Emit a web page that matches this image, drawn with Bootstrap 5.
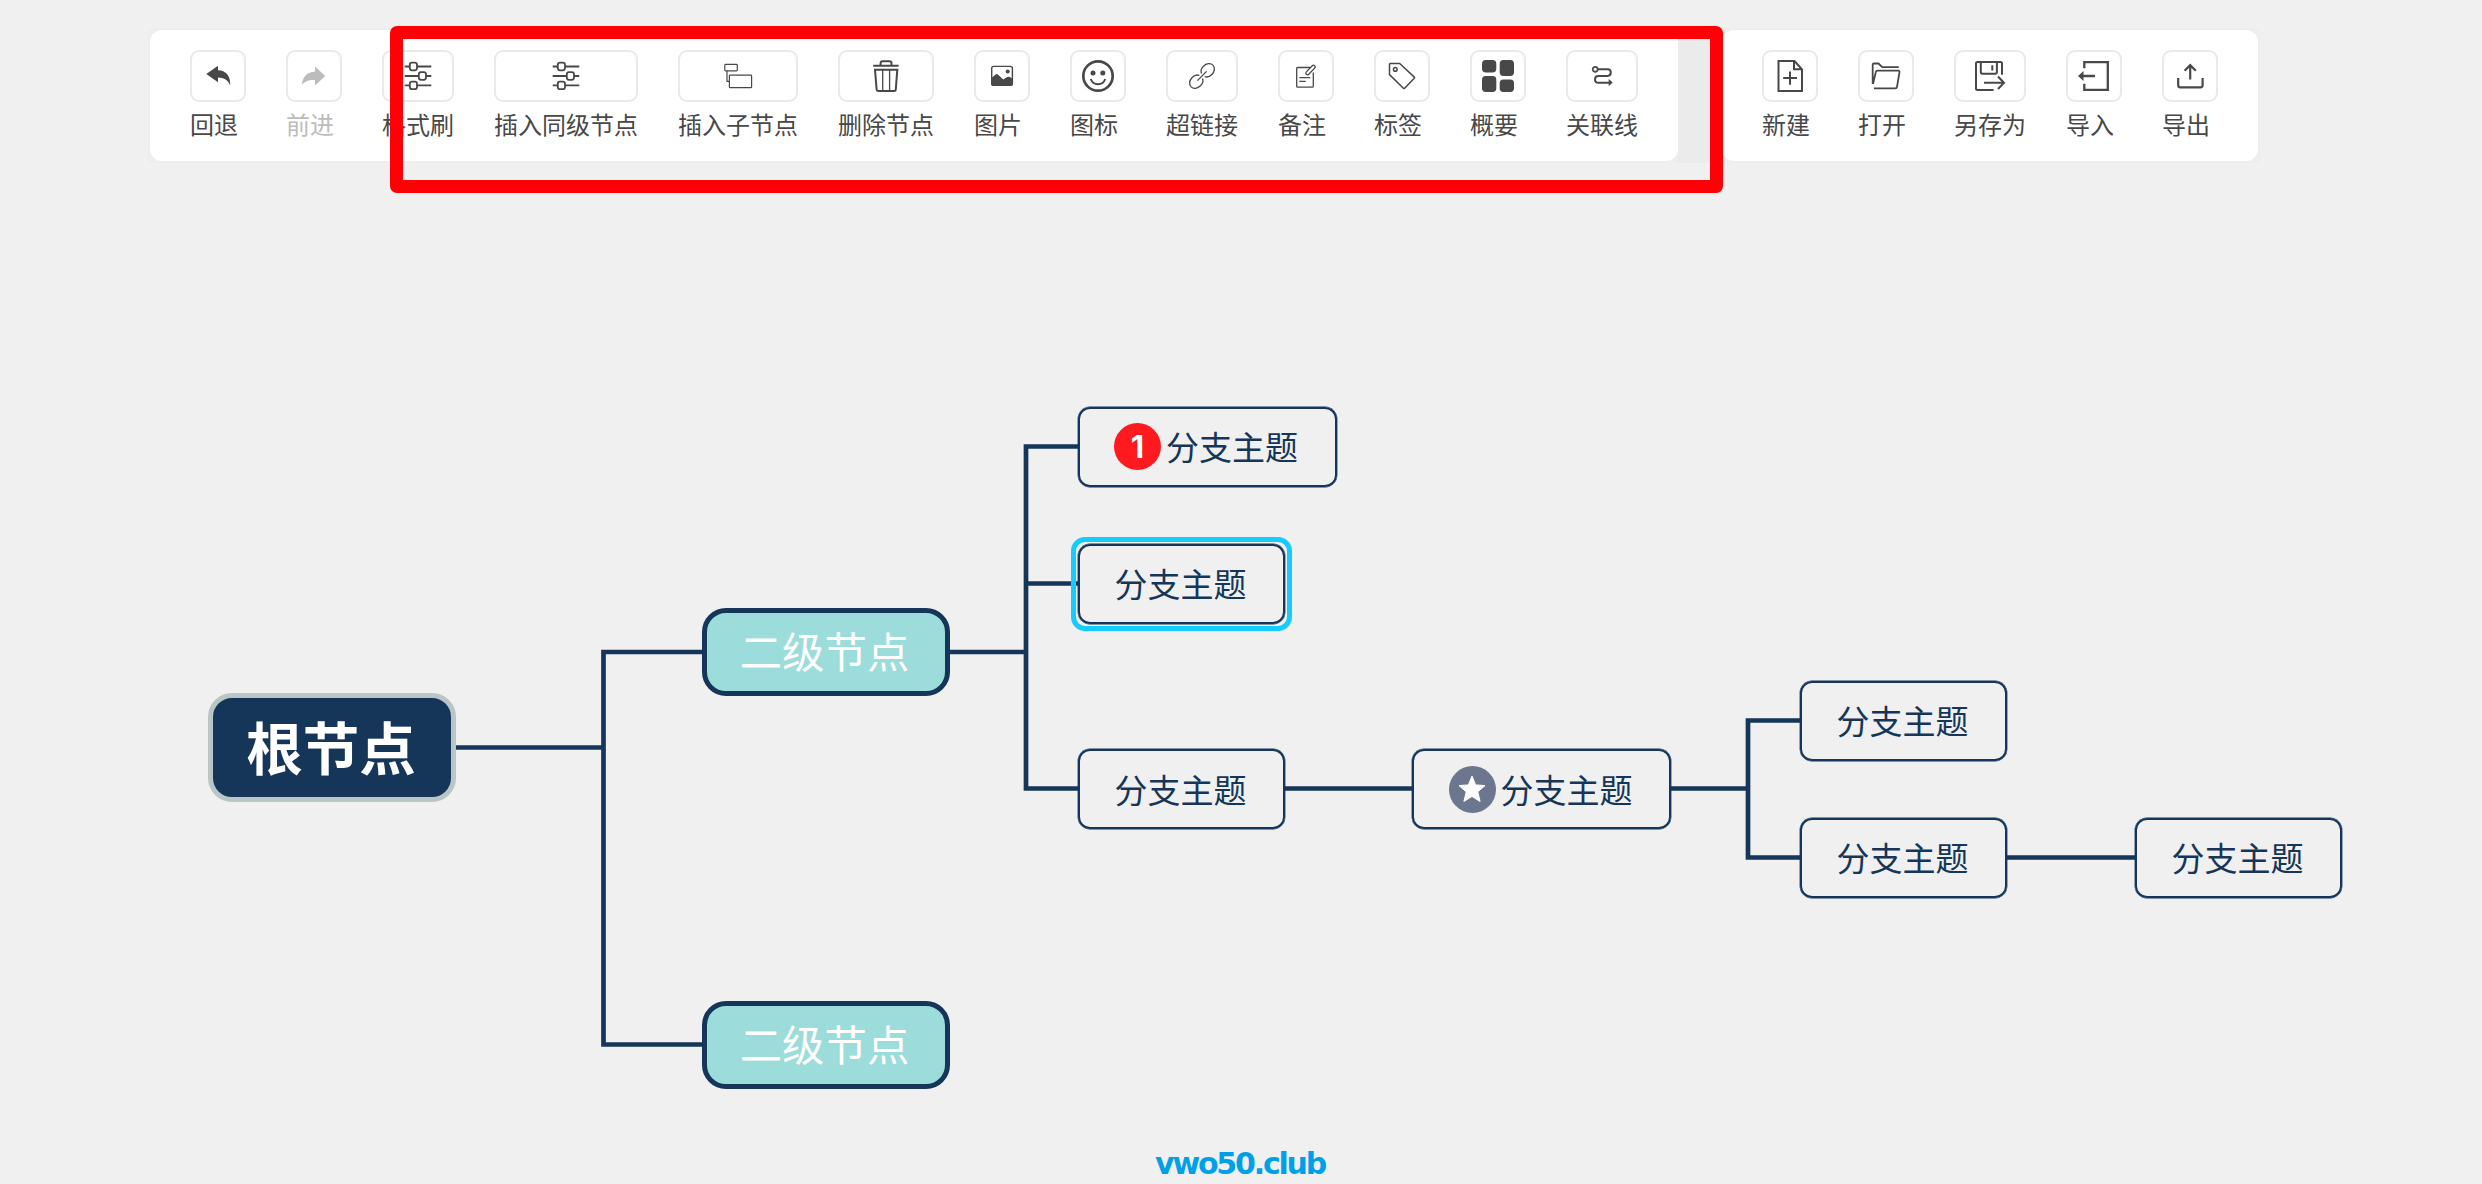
<!DOCTYPE html>
<html lang="zh-CN">
  <head>
    <meta charset="UTF-8" />
    <meta name="viewport" content="width=device-width, initial-scale=1.0" />
    <title>思维导图</title>
    <!-- Bootstrap CSS CDN -->
    <link
      href="https://cdn.jsdelivr.net/npm/bootstrap@5.3.3/dist/css/bootstrap.min.css"
      rel="stylesheet"
      crossorigin="anonymous"
    />
    <style>
      :root {
        --navy: #163659;
        --ink: #484848;
      }
      body {
        width: 2482px;
        height: 1184px;
        background: #f0f0f0;
        color: var(--ink);
        font-family: "Noto Sans CJK SC", sans-serif;
      }
      /* Toolbar */
      .toolbar-row {
        width: 2112px;
        height: 135px;
        margin: 28px 0 0 148px;
        padding: 2px;
        gap: 44px;
        background: linear-gradient(#ebebeb, #ebebeb) 1530px 0 / 48px 100% no-repeat #eeeeee;
      }
      .tool-group {
        height: 131px;
        padding: 20px 40px 0;
        gap: 40px;
        border-radius: 12px;
      }
      .tool-btn {
        color: inherit;
        font-size: 24px;
        line-height: 43px;
        white-space: nowrap;
      }
      .tool-btn.off {
        color: #bcbcbc;
      }
      .tool-icon {
        min-width: 56px;
        height: 52px;
        border: 2px solid #e9e9e9;
        border-radius: 9px;
      }
      .tool-icon svg {
        width: 32px;
        height: 32px;
        fill: none;
        stroke: currentColor;
        stroke-width: 2;
        overflow: visible;
      }
      .tool-icon svg .solid {
        fill: currentColor;
        stroke: none;
      }
      .red-frame {
        left: 390px;
        top: 26px;
        width: 1333px;
        height: 167px;
        border: 13px solid #ff0006;
        border-radius: 7px;
      }
      /* Mind map */
      .links {
        left: 0;
        top: 0;
        fill: none;
        stroke: var(--navy);
        stroke-width: 4.7px;
      }
      .node {
        width: 207px;
        height: 80px;
        padding-right: 1px;
        gap: 5px;
        border: 2px solid var(--navy);
        border-radius: 12px;
        box-shadow: 0 0 0 0.4px var(--navy);
        color: var(--navy);
        font-size: 33px;
        line-height: 1;
        white-space: nowrap;
      }
      .node.wide {
        width: 259px;
        padding-right: 2px;
      }
      .node.second {
        width: 248px;
        height: 88px;
        padding: 0 3px 3px 0;
        border-width: 5px;
        border-radius: 24px;
        box-shadow: none;
        background: #9cdcda;
        color: #fff;
        font-size: 42.4px;
      }
      .node.root {
        width: 248px;
        height: 109px;
        padding: 0 2px 5px 0;
        border: 5px solid #bac5c8;
        border-radius: 24px;
        box-shadow: none;
        background: var(--navy);
        color: #fff;
        font-size: 56.5px;
        font-weight: 700;
      }
      .node.active::after {
        content: "";
        position: absolute;
        inset: -9px;
        border: 5px solid #16ccff;
        border-radius: 14px;
      }
      .marker {
        width: 47px;
        height: 47px;
        border-radius: 50%;
        background: #ff1a1f;
        color: #fff;
        font: 700 31px/47px Inter, sans-serif;
      }
      .marker.star {
        background: #6d768f;
      }
      #root { left: 208px; top: 693px; }
      #second1 { left: 702px; top: 608px; }
      #second2 { left: 702px; top: 1001px; }
      #topic1 { left: 1077.5px; top: 406.5px; }
      #topic2 { left: 1077.5px; top: 543.5px; }
      #topic3 { left: 1077.5px; top: 749px; }
      #topic4 { left: 1412px; top: 749px; }
      #topic5 { left: 1799.5px; top: 680.5px; }
      #topic6 { left: 1799.5px; top: 817.5px; }
      #topic7 { left: 2134.5px; top: 817.5px; }
      .site-mark {
        right: 1157px;
        bottom: 3px;
        color: #00a0e9;
        font: 700 30px/34px "DejaVu Sans", sans-serif;
        letter-spacing: -2.2px;
      }
    </style>
  </head>
  <body class="position-relative overflow-hidden">
    <!-- Toolbar Start -->
    <header class="toolbar-row d-inline-flex">
      <div class="tool-group bg-white d-flex">
        <a class="tool-btn d-flex flex-column text-decoration-none">
          <span class="tool-icon d-flex align-items-center justify-content-center">
            <svg viewBox="0 0 32 32"><path class="solid" d="M4.3 14 16 5.8v4.5c8 .2 12.7 5.7 12.2 14.9-2.7-5.5-6.7-7.4-12.2-7.6v4.6z" /></svg>
          </span>
          <span>回退</span>
        </a>
        <a class="tool-btn off d-flex flex-column text-decoration-none">
          <span class="tool-icon d-flex align-items-center justify-content-center">
            <svg viewBox="0 0 32 32"><path class="solid" d="M27.3 16 17 6.6v4.9C9 12 4.5 17 4 24.6c3.5-3.6 7-4.8 13-4.6v5.4z" /></svg>
          </span>
          <span>前进</span>
        </a>
        <a class="tool-btn d-flex flex-column text-decoration-none">
          <span class="tool-icon d-flex align-items-center justify-content-center">
            <svg viewBox="0 0 32 32">
              <g stroke-width="1.8">
                <path d="M2.7 6.500h5M15 6.500h14.300M2.700 16h14M24 16h5.300M2.700 25.400h5M15 25.400h14.300" />
                <rect x="7.800" y="2.700" width="7.200" height="7.600" rx="2.200" />
                <rect x="16.800" y="12.200" width="7.200" height="7.600" rx="2.200" />
                <rect x="7.800" y="21.600" width="7.200" height="7.600" rx="2.200" />
              </g>
            </svg>
          </span>
          <span>格式刷</span>
        </a>
        <a class="tool-btn d-flex flex-column text-decoration-none">
          <span class="tool-icon d-flex align-items-center justify-content-center">
            <svg viewBox="0 0 32 32">
              <g stroke-width="1.800">
                <path d="M2.700 6.500h5M15 6.500h14.300M2.700 16h14M24 16h5.300M2.700 25.400h5M15 25.400h14.300" />
                <rect x="7.800" y="2.700" width="7.200" height="7.600" rx="2.200" />
                <rect x="16.800" y="12.200" width="7.200" height="7.600" rx="2.200" />
                <rect x="7.800" y="21.600" width="7.200" height="7.600" rx="2.200" />
              </g>
            </svg>
          </span>
          <span>插入同级节点</span>
        </a>
        <a class="tool-btn d-flex flex-column text-decoration-none">
          <span class="tool-icon d-flex align-items-center justify-content-center">
            <svg viewBox="0 0 32 32">
              <g stroke-width="1.200">
                <rect x="2.800" y="4.400" width="12.500" height="6.400" rx=".8" />
                <rect x="7.400" y="15.200" width="22.200" height="12.500" rx=".8" />
                <path d="M5 10.800v10.600h2.400" />
              </g>
            </svg>
          </span>
          <span>插入子节点</span>
        </a>
        <a class="tool-btn d-flex flex-column text-decoration-none">
          <span class="tool-icon d-flex align-items-center justify-content-center">
            <svg viewBox="0 0 32 32">
              <path d="M3.200 5.800h25.400M10.600 5.800V3.200q0-2 2-2h6.900q2 0 2 2v2.600M5 9.700h22.300l-1.500 19.600q-.1 1.600-1.700 1.600H8.300q-1.600 0-1.700-1.600z" />
              <path stroke-width="1.300" d="M12.700 10v20.500M19.600 10v20.500" />
            </svg>
          </span>
          <span>删除节点</span>
        </a>
        <a class="tool-btn d-flex flex-column text-decoration-none">
          <span class="tool-icon d-flex align-items-center justify-content-center">
            <svg viewBox="0 0 32 32">
              <rect x="5.700" y="6.400" width="20.700" height="19" rx="2" stroke-width="1.400" />
              <path class="solid" d="M5.500 18l4-3.600q1.200-1 2.400 0l5.300 5 4-2.300q1.500-.8 2.700 0l2.500 1.700V24q0 2-2 2H7.500q-2 0-2-2z" />
              <circle class="solid" cx="21.700" cy="11.600" r="2" />
            </svg>
          </span>
          <span>图片</span>
        </a>
        <a class="tool-btn d-flex flex-column text-decoration-none">
          <span class="tool-icon d-flex align-items-center justify-content-center">
            <svg viewBox="0 0 32 32">
              <circle cx="16" cy="16" r="14.700" stroke-width="2.700" />
              <circle class="solid" cx="11" cy="13" r="2.500" />
              <circle class="solid" cx="20.800" cy="13" r="2.500" />
              <path d="M8.700 19c2.700 7 11.900 7 14.600 0" />
            </svg>
          </span>
          <span>图标</span>
        </a>
        <a class="tool-btn d-flex flex-column text-decoration-none">
          <span class="tool-icon d-flex align-items-center justify-content-center">
            <svg viewBox="0 0 32 32">
              <g stroke-width="1.300" transform="rotate(-45 16 16)">
                <path d="M9.500 16h13" />
                <path d="M14.500 13.800C13.500 11.300 11 10.100 8 10.100c-4.200 0-7.400 2.600-7.400 5.900s3.200 5.900 7.400 5.900c3 0 5.500-1.200 6.500-3.700M17.500 13.800c1-2.500 3.500-3.700 6.500-3.700 4.200 0 7.400 2.600 7.400 5.900s-3.200 5.900-7.400 5.900c-3 0-5.500-1.200-6.500-3.700" />
              </g>
            </svg>
          </span>
          <span>超链接</span>
        </a>
        <a class="tool-btn d-flex flex-column text-decoration-none">
          <span class="tool-icon d-flex align-items-center justify-content-center">
            <svg viewBox="0 0 32 32">
              <g stroke-width="1.300">
                <path d="M20 7.500H7.700q-1 0-1 1v17.700q0 1 1 1h14.600q1 0 1-1V12.500M9.300 17.700h11M9.300 21.400h6.400" />
                <rect x="14.500" y="8.300" width="12" height="3.400" rx="1.700" transform="rotate(-46 20.500 10)" />
              </g>
            </svg>
          </span>
          <span>备注</span>
        </a>
        <a class="tool-btn d-flex flex-column text-decoration-none">
          <span class="tool-icon d-flex align-items-center justify-content-center">
            <svg viewBox="0 0 32 32">
              <g stroke-width="1.500" stroke-linejoin="round">
                <path d="M4.300 3.500h9.400l14.600 13.600q.6.600 0 1.200l-9.700 9.900q-.6.600-1.200 0L3.500 14.600V4.300q0-.8.800-.8z" />
                <circle cx="9.300" cy="9.400" r="1.800" />
              </g>
            </svg>
          </span>
          <span>标签</span>
        </a>
        <a class="tool-btn d-flex flex-column text-decoration-none">
          <span class="tool-icon d-flex align-items-center justify-content-center">
            <svg viewBox="0 0 32 32">
              <rect class="solid" width="14.300" height="12.400" rx="3.700" />
              <rect class="solid" x="17.700" width="14.300" height="16" rx="3.700" />
              <rect class="solid" y="16" width="14.300" height="16" rx="3.700" />
              <rect class="solid" x="17.700" y="19.600" width="14.300" height="12.400" rx="3.700" />
            </svg>
          </span>
          <span>概要</span>
        </a>
        <a class="tool-btn d-flex flex-column text-decoration-none">
          <span class="tool-icon d-flex align-items-center justify-content-center">
            <svg viewBox="0 0 32 32">
              <circle cx="9.200" cy="9.300" r="2.500" stroke-width="1.700" />
              <path d="M12 9.300h9.500q3.300 0 3.300 3.300t-3.300 3.400h-9q-3.500 0-3.500 3.400t3.500 3.300h11" />
              <path class="solid" d="M22.700 19v7.200l4-3.600z" />
            </svg>
          </span>
          <span>关联线</span>
        </a>
      </div>

      <div class="tool-group bg-white d-flex">
        <a class="tool-btn d-flex flex-column text-decoration-none">
          <span class="tool-icon d-flex align-items-center justify-content-center">
            <svg viewBox="0 0 32 32">
              <path d="M4.500 1h16l7.500 8.300V31H4.500zM20 1v8.300h8M16 11.400v13.400M9.200 18.100h13.800" />
            </svg>
          </span>
          <span>新建</span>
        </a>
        <a class="tool-btn d-flex flex-column text-decoration-none">
          <span class="tool-icon d-flex align-items-center justify-content-center">
            <svg viewBox="0 0 32 32">
              <path stroke-width="1.800" d="M2.700 24V4.800q0-1.300 1.300-1.300h4.500l3.700 3.700h16.600M3.900 28.300h21.300q1.600 0 1.800-1.500l2.500-14.600q.2-1.500-1.300-1.500H7.500q-1.500 0-1.700 1.500L3 24" />
            </svg>
          </span>
          <span>打开</span>
        </a>
        <a class="tool-btn d-flex flex-column text-decoration-none">
          <span class="tool-icon d-flex align-items-center justify-content-center">
            <svg viewBox="0 0 32 32">
              <path d="M19.600 30H3.500Q2 30 2 28.500v-25Q2 2 3.500 2h23Q28 2 28 3.500v11.200M6.800 2v10q0 1.700 1.700 1.700h12.700q1.700 0 1.700-1.700V2M18.300 5.300v5.200M10 22.800h20M24 16.500l6 6.300-6 6.200" />
            </svg>
          </span>
          <span>另存为</span>
        </a>
        <a class="tool-btn d-flex flex-column text-decoration-none">
          <span class="tool-icon d-flex align-items-center justify-content-center">
            <svg viewBox="0 0 32 32">
              <path d="M6.300 8.300V2.200h23.500v27.600H6.300v-6M17 16H2.500" stroke-width="2.300" />
              <path class="solid" d="M0 16l5.500-5v10z" />
            </svg>
          </span>
          <span>导入</span>
        </a>
        <a class="tool-btn d-flex flex-column text-decoration-none">
          <span class="tool-icon d-flex align-items-center justify-content-center">
            <svg viewBox="0 0 32 32">
              <path stroke-width="2.200" d="M4.200 18v7.300q0 2 2 2h20.400q2 0 2-2V18M16.200 19.500V5.300M10.600 10.700l5.600-5.600 5.600 5.600" />
            </svg>
          </span>
          <span>导出</span>
        </a>
      </div>
    </header>
    <div class="red-frame position-absolute"></div>
    <!-- Toolbar End -->

    <!-- Mind Map Start -->
    <main>
      <svg class="links position-absolute" width="2482" height="1184">
        <path d="M454 747.500h149.500M704 652H603.500v392.500H704" />
        <path d="M948 652h78M1078 446.500h-52v342h52M1026 583.500h52" />
        <path d="M1284 788.500h129M1671 788.500h77M1800 720.500h-52v137h52M2006 857.500h129" />
      </svg>

      <div id="root" class="node root position-absolute d-flex align-items-center justify-content-center">根节点</div>
      <div id="second1" class="node second position-absolute d-flex align-items-center justify-content-center">二级节点</div>
      <div id="second2" class="node second position-absolute d-flex align-items-center justify-content-center">二级节点</div>
      <div id="topic1" class="node wide position-absolute d-flex align-items-center justify-content-center">
        <span class="marker text-center">1</span>
        <span>分支主题</span>
      </div>
      <div id="topic2" class="node active position-absolute d-flex align-items-center justify-content-center">分支主题</div>
      <div id="topic3" class="node position-absolute d-flex align-items-center justify-content-center">分支主题</div>
      <div id="topic4" class="node wide position-absolute d-flex align-items-center justify-content-center">
        <span class="marker star d-flex align-items-center justify-content-center">
          <svg width="28" height="28" viewBox="0 0 28 28" fill="#fff" stroke="#fff" stroke-width="1" stroke-linejoin="round">
            <path d="M14 1l3.600 8.900 9.400.7-7.200 6.200 2.300 9.700L14 21.400l-8.100 5.100 2.300-9.700L1 10.600l9.400-.7z" />
          </svg>
        </span>
        <span>分支主题</span>
      </div>
      <div id="topic5" class="node position-absolute d-flex align-items-center justify-content-center">分支主题</div>
      <div id="topic6" class="node position-absolute d-flex align-items-center justify-content-center">分支主题</div>
      <div id="topic7" class="node position-absolute d-flex align-items-center justify-content-center">分支主题</div>
    </main>
    <!-- Mind Map End -->

    <footer class="site-mark position-absolute">vwo50.club</footer>

    <script
      src="https://cdn.jsdelivr.net/npm/bootstrap@5.3.3/dist/js/bootstrap.bundle.min.js"
      crossorigin="anonymous"
    ></script>
  </body>
</html>
